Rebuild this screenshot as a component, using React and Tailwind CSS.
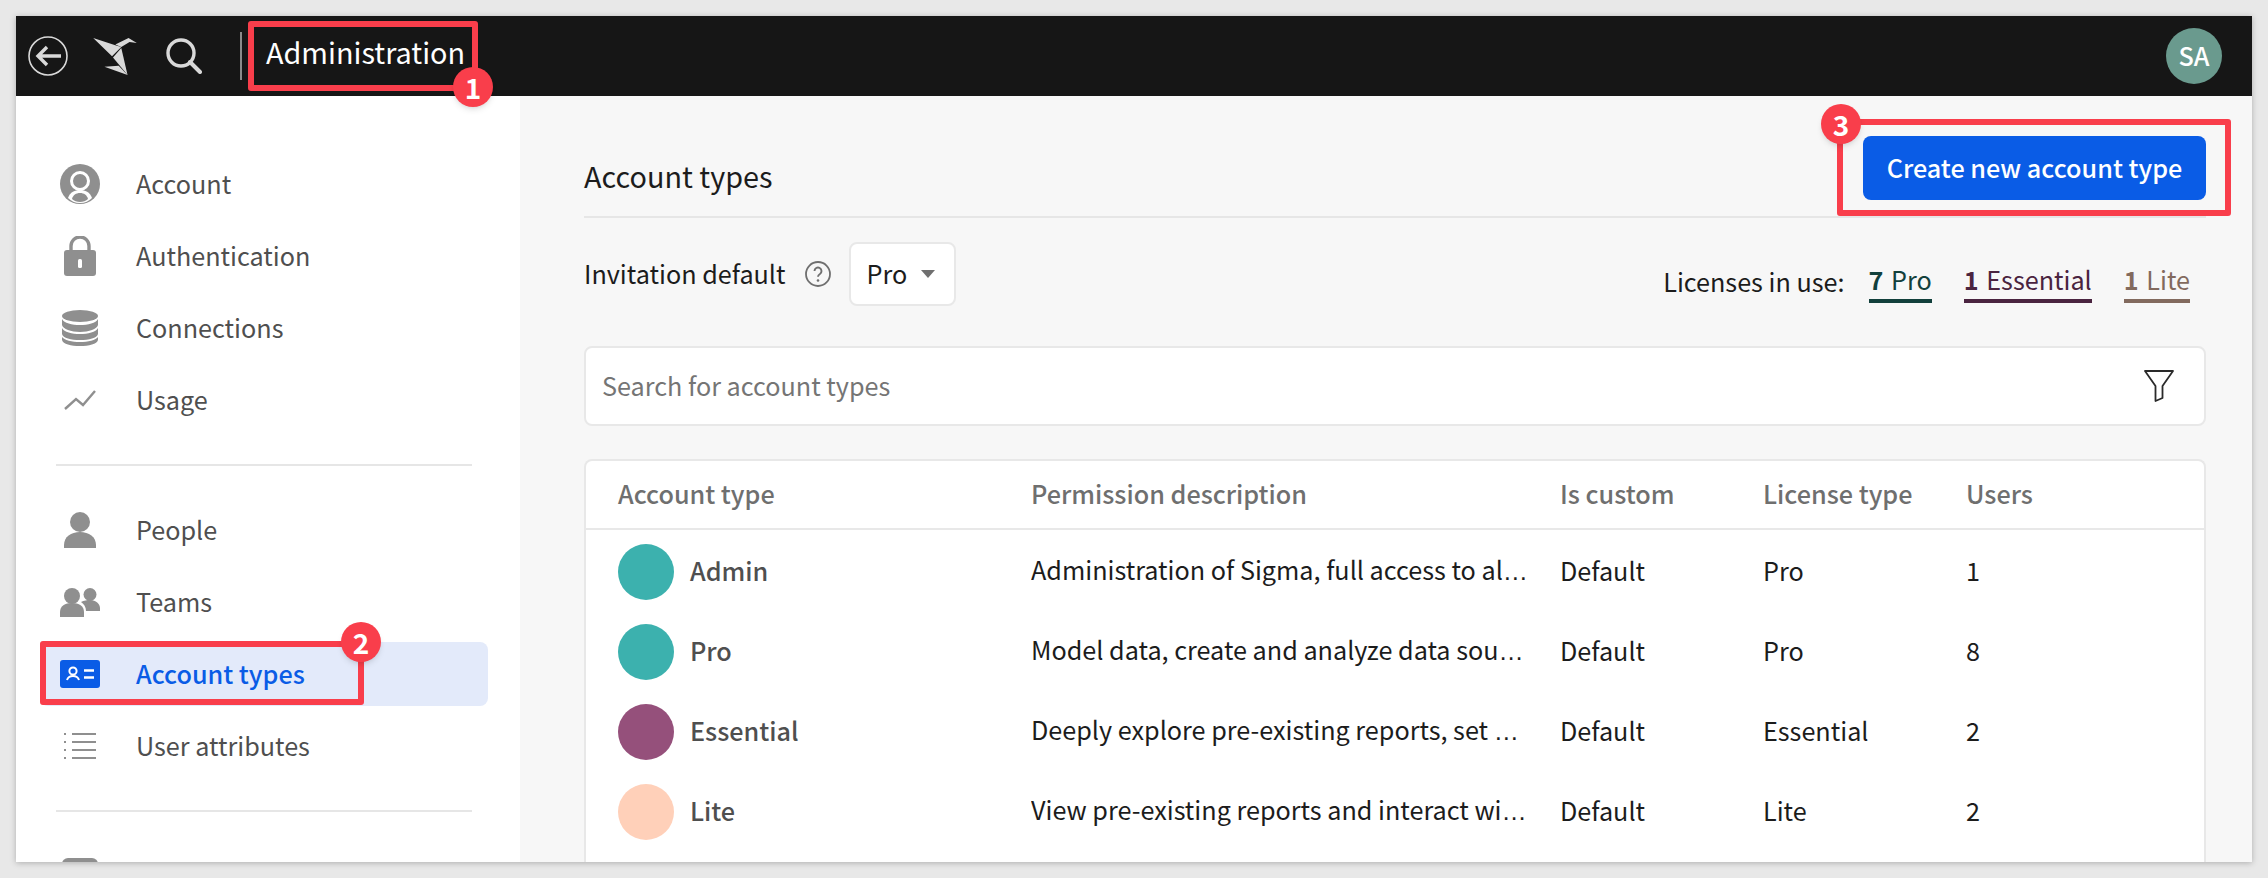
import React from "react";

const F = { fontFamily: '"Noto Sans CJK KR", "Noto Sans", sans-serif' };

const G = "#8f8f8f";

const ic = {
  account: (
    <svg width="40" height="40" viewBox="0 0 40 40">
      <circle cx="20" cy="20" r="20" fill={G} />
      <circle cx="20" cy="17" r="8.5" fill="none" stroke="#fff" strokeWidth="3" />
      <path d="M8 34c2-6 7-8 12-8s10 2 12 8c-3 3-7 5-12 5s-9-2-12-5z" fill="#fff" />
      <path d="M12 35c1-4 4-6 8-6s7 2 8 6c-2 2-5 3-8 3s-6-1-8-3z" fill={G} />
    </svg>
  ),
  lock: (
    <svg width="32" height="40" viewBox="0 0 32 40">
      <path d="M7 16V10a9 9 0 0 1 18 0v6" fill="none" stroke={G} strokeWidth="3.4" />
      <rect x="0" y="14" width="32" height="26" rx="3" fill={G} />
      <rect x="14" y="23" width="4" height="9" rx="1.5" fill="#fff" />
    </svg>
  ),
  db: (
    <svg width="36" height="36" viewBox="0 0 36 36">
      <ellipse cx="18" cy="6" rx="18" ry="6" fill={G} />
      <path d="M0 9c2 4 10 6 18 6s16-2 18-6v6c-1 4-9 7-18 7S1 19 0 15z" fill={G} />
      <path d="M0 18c2 4 10 6 18 6s16-2 18-6v6c-1 4-9 6-18 6S1 28 0 24z" fill={G} />
      <path d="M0 27c2 3 10 5 18 5s16-2 18-5v3c-1 4-9 6-18 6S1 34 0 30z" fill={G} />
    </svg>
  ),
  usage: (
    <svg width="32" height="20" viewBox="0 0 32 20">
      <path d="M1 19l11-10 7 6L31 1" fill="none" stroke={G} strokeWidth="2.4" />
    </svg>
  ),
  people: (
    <svg width="32" height="36" viewBox="0 0 32 36">
      <circle cx="16" cy="10" r="10" fill={G} />
      <path d="M0 36v-3c0-8 7-13 16-13s16 5 16 13v3z" fill={G} />
    </svg>
  ),
  teams: (
    <svg width="40" height="29" viewBox="0 0 40 29">
      <circle cx="12" cy="8" r="8" fill={G} />
      <circle cx="30" cy="6.5" r="6.5" fill={G} />
      <path d="M0 29v-5c0-6 5-9 12-9s12 3 12 9v5z" fill={G} />
      <path d="M21 14c3-1.500 6-2 9-2 6 0 10 4 10 8v3H26c0-4-2-7-5-9z" fill={G} />
    </svg>
  ),
  types: (
    <svg width="40" height="28" viewBox="0 0 40 28">
      <rect width="40" height="28" rx="3" fill="#0a5ce6" />
      <circle cx="13" cy="11" r="3.6" fill="none" stroke="#fff" strokeWidth="2" />
      <path d="M7 20c1-3 3-4 6-4s5 1 6 4" fill="none" stroke="#fff" strokeWidth="2" />
      <path d="M24 10.500h10M24 17.500h10" stroke="#fff" strokeWidth="2.4" />
    </svg>
  ),
  attrs: (
    <svg width="32" height="28" viewBox="0 0 32 28">
      <path d="M8 2h24M8 10h24M8 18h24M8 26h24" stroke={G} strokeWidth="2" />
      <path d="M0 2h2M0 10h2M0 18h2M0 26h2" stroke={G} strokeWidth="2" />
    </svg>
  ),
};

function Item({ icon, label, active }) {
  return (
    <div className={`flex h-16 shrink-0 items-center rounded-lg pl-5 ${active ? "bg-[#e3eafa]" : ""}`}>
      <div className="w-[76px] shrink-0">
        <div className="flex w-10 justify-center">{icon}</div>
      </div>
      <span className={`-mt-[3px] text-[25.2px] leading-8 ${active ? "font-medium text-[#0a5ce6]" : "text-[#4f4f4f]"}`}>
        {label}
      </span>
    </div>
  );
}

function Rule() {
  return <div className="mx-4 my-6 h-0.5 shrink-0 bg-[#e6e6e6]" />;
}

function Sidebar() {
  return (
    <aside className="flex w-[504px] shrink-0 flex-col gap-2 overflow-hidden bg-white pl-6 pr-8 pt-14">
      <Item icon={ic.account} label="Account" />
      <Item icon={ic.lock} label="Authentication" />
      <Item icon={ic.db} label="Connections" />
      <Item icon={ic.usage} label="Usage" />
      <Rule />
      <Item icon={ic.people} label="People" />
      <Item icon={ic.teams} label="Teams" />
      <Item icon={ic.types} label="Account types" active />
      <Item icon={ic.attrs} label="User attributes" />
      <Rule />
      <div className="flex h-16 shrink-0 items-center pl-[22px]">
        <div className="h-9 w-9 rounded-md bg-[#8f8f8f]" />
      </div>
    </aside>
  );
}

const rows = [
  ["Admin", "#3cb1ae", "Administration of Sigma, full access to all features and all data in the organization", "Pro", "1"],
  ["Pro", "#3cb1ae", "Model data, create and analyze data sources, build workbooks and share them", "Pro", "8"],
  ["Essential", "#95507b", "Deeply explore pre-existing reports, set alerts and schedule exports for sharing", "Essential", "2"],
  ["Lite", "#ffd0b9", "View pre-existing reports and interact with their controls, filters and charts", "Lite", "2"],
];

const grid = "grid grid-cols-[413px_529px_203px_203px_1fr]";

function Table() {
  return (
    <div className="mt-[33px] flex-1 rounded-t-lg border-x-2 border-t-2 border-[#e8e8e8] bg-white">
      <div className={`${grid} h-[69px] items-center border-b-2 border-[#e8e8e8] pl-8 text-[25.2px] font-medium text-[#6f6f6f]`}>
        <div className="-mt-0.5">Account type</div>
        <div className="-mt-0.5">Permission description</div>
        <div className="-mt-0.5">Is custom</div>
        <div className="-mt-0.5">License type</div>
        <div className="-mt-0.5">Users</div>
      </div>
      <div className="pt-0.5">
        {rows.map(([name, color, desc, lic, users]) => (
          <div key={name} className={`${grid} h-20 items-center pl-8 text-[25.2px] text-[#1c1c1c]`}>
            <div className="flex items-center gap-4">
              <div className="h-14 w-14 rounded-full" style={{ backgroundColor: color }} />
              <span className="-mt-0.5 font-medium text-[#4f4f4f]">{name}</span>
            </div>
            <div className="-mt-0.5 truncate pr-8 font-['Liberation_Sans']">
              <span className="font-['Noto_Sans_CJK_KR']">{desc}</span>
            </div>
            <div className="-mt-0.5">Default</div>
            <div className="-mt-0.5">{lic}</div>
            <div className="-mt-0.5">{users}</div>
          </div>
        ))}
      </div>
    </div>
  );
}

function Lic({ n, label, text, bar }) {
  return (
    <div className={`border-b-4 pb-0.5 text-[25.2px] leading-9 ${text} ${bar}`}>
      <span className="mr-0.5 font-semibold">{n}</span> {label}
    </div>
  );
}

function Main() {
  return (
    <main className="flex min-w-0 flex-1 flex-col bg-[#f7f7f7] pl-16 pr-[46px] pt-10">
      <div className="flex h-[82px] shrink-0 items-start justify-between border-b-2 border-[#e6e6e6]">
        <h1 className="mt-5 text-[28.8px] leading-10 text-[#1c1c1c]">Account types</h1>
        <button className="flex h-16 w-[343px] items-center justify-center rounded-lg bg-[#0a5ce6] text-[25.2px] font-medium text-white">
          Create new account type
        </button>
      </div>
      <div className="mt-6 flex h-[64px] shrink-0 items-center justify-between">
        <div className="flex items-center text-[25.2px] text-[#1c1c1c]">
          <span>Invitation default</span>
          <svg className="ml-[19px]" width="26" height="26" viewBox="0 0 26 26">
            <circle cx="13" cy="13" r="12" fill="none" stroke="#6f6f6f" strokeWidth="1.8" />
            <path d="M9.500 10a3.500 3.500 0 1 1 5.400 3c-1.300.8-1.900 1.400-1.900 2.800" fill="none" stroke="#6f6f6f" strokeWidth="1.9" />
            <circle cx="13" cy="19.5" r="1.3" fill="#6f6f6f" />
          </svg>
          <div className="ml-[18px] flex h-[64px] w-[107px] items-center rounded-lg border-2 border-[#e8e8e8] bg-white pl-4">
            <span>Pro</span>
            <svg className="ml-3.5" width="14" height="8" viewBox="0 0 14 8"><path d="M0 0h14L7 8z" fill="#6f6f6f" /></svg>
          </div>
        </div>
        <div className="mr-4 mt-4 flex items-center gap-8">
          <span className="-mr-2 text-[25.2px] text-[#1c1c1c]">Licenses in use:</span>
          <Lic n="7" label="Pro" text="text-[#12403c]" bar="border-[#12403c]" />
          <Lic n="1" label="Essential" text="text-[#4a2440]" bar="border-[#4a2440]" />
          <Lic n="1" label="Lite" text="text-[#826a5e]" bar="border-[#826a5e]" />
        </div>
      </div>
      <div className="mt-10 flex h-20 shrink-0 items-center justify-between rounded-lg border-2 border-[#e8e8e8] bg-white pl-4 pr-[30px] text-[25.2px] text-[#757575]">
        <span>Search for account types</span>
        <svg width="30" height="32" viewBox="0 0 30 32">
          <path d="M1 1h28L18.500 16v12l-7 3V16z" fill="none" stroke="#2a2a2a" strokeWidth="1.8" strokeLinejoin="round" />
        </svg>
      </div>
      <Table />
    </main>
  );
}

function Callout({ box, badge, n }) {
  return (
    <>
      <div className={`absolute rounded-[3px] border-[6px] border-[#f93e4b] ${box}`} />
      <div className={`absolute flex h-10 w-10 items-center justify-center rounded-full bg-[#f93e4b] text-[28px] font-bold leading-none text-white shadow-md ${badge}`}>
        {n}
      </div>
    </>
  );
}

export default function App() {
  return (
    <div style={F} className="relative h-[878px] w-[2268px] overflow-hidden bg-[#e8e8e8] p-4">
      <div className="flex h-full w-full flex-col overflow-hidden shadow-[0_1px_6px_rgba(0,0,0,0.25)]">
        <header className="flex h-20 shrink-0 items-center bg-[#161616] pl-3 pr-[30px]">
          <svg width="40" height="40" viewBox="0 0 40 40">
            <circle cx="20" cy="20" r="19" fill="none" stroke="#d9d9d9" strokeWidth="1.6" />
            <path d="M33 20H10M19 11l-9 9 9 9" fill="none" stroke="#d9d9d9" strokeWidth="3.4" />
          </svg>
          <svg className="ml-[25px]" width="44" height="37" viewBox="218 28 132 112">
            <path d="M218 28L285 50 303 55 275 83z" fill="#d9d9d9" />
            <path d="M285 48L325 28 350 43 328 40 303 55z" fill="#d9d9d9" />
            <path d="M303 58L322 140 278 87z" fill="#d9d9d9" />
            <path d="M252 115L295 112 322 140z" fill="#d9d9d9" />
          </svg>
          <svg className="ml-[29px]" width="36" height="36" viewBox="0 0 36 36">
            <circle cx="15" cy="15" r="13" fill="none" stroke="#d9d9d9" strokeWidth="3.4" />
            <path d="M24 24l10 10" stroke="#d9d9d9" strokeWidth="4" strokeLinecap="round" />
          </svg>
          <div className="ml-[38px] h-12 w-0.5 bg-[#8a8a8a]" />
          <div className="-mt-2 ml-6 text-[28.8px] leading-10 text-white">Administration</div>
          <div className="ml-auto flex h-14 w-14 items-center justify-center rounded-full bg-[#6a9a8e] text-[25.2px] font-medium text-white">
            SA
          </div>
        </header>
        <div className="flex min-h-0 flex-1">
          <Sidebar />
          <Main />
        </div>
      </div>
      <Callout box="left-[248px] top-[21px] h-[70px] w-[230px]" badge="left-[453px] top-[67px]" n="1" />
      <Callout box="left-[40px] top-[641px] h-[64px] w-[324px]" badge="left-[341px] top-[622px]" n="2" />
      <Callout box="left-[1837px] top-[119px] h-[97px] w-[394px]" badge="left-[1821px] top-[104px]" n="3" />
    </div>
  );
}
